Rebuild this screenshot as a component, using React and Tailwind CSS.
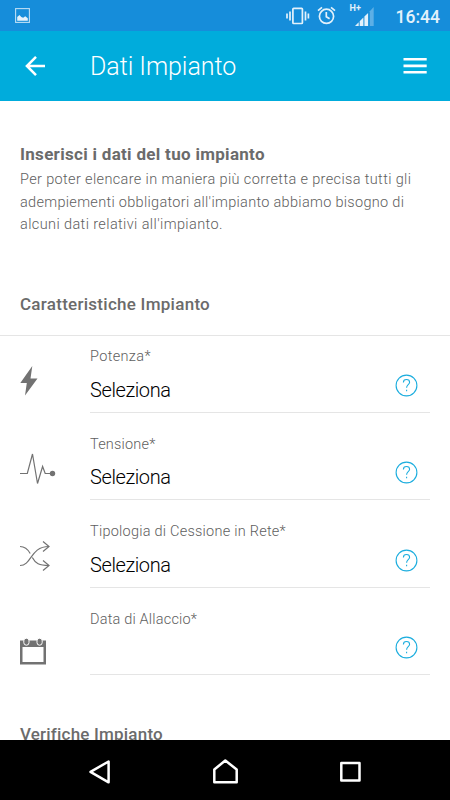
import React from "react";

const BoltIcon = () => (
  <svg width="18" height="30" viewBox="0 0 18 30" fill="#727272">
    <path d="M12.3 0L0.3 17H6.8L5 29.5L17.5 12.5H10.5Z" />
  </svg>
);

const PulseIcon = () => (
  <svg width="36" height="34" viewBox="0 0 36 34" fill="none" stroke="#727272" strokeWidth="1.2">
    <path d="M0 21.5H7.3L12.5 2L17.5 31.5L22.6 14.5L25.2 21.5H32" />
    <circle cx="32.5" cy="21.5" r="2.7" fill="#727272" stroke="none" />
  </svg>
);

const ShuffleIcon = () => (
  <svg width="31" height="30" viewBox="0 0 31 30" fill="none" stroke="#727272" strokeWidth="1.2">
    <path d="M0 5.5C5.5 5.5 8 8.5 10.2 12.5M12.3 16.5C15.5 22.5 19 24.5 29 24.5" />
    <path d="M0 24.5C12 24.5 10 5.5 29 5.5" />
    <path d="M23 0.5L29 5.5L23 10.5M23 19.5L29 24.5L23 29.5" />
  </svg>
);

const CalendarIcon = () => (
  <svg width="26" height="27" viewBox="0 0 26 27" fill="#727272">
    <path fillRule="evenodd" d="M0 2.5H26V26.5H0ZM2.5 9V24H23.5V9Z" />
    <g stroke="#fff" strokeWidth="1">
      <rect x="3.8" y="0.2" width="5.2" height="7" rx="2.6" />
      <rect x="17" y="0.2" width="5.2" height="7" rx="2.6" />
    </g>
  </svg>
);

const HelpIcon = () => (
  <svg width="23" height="23" viewBox="0 0 23 23" fill="none" stroke="#1badde" strokeWidth="1.1">
    <circle cx="11.5" cy="11.5" r="10.4" />
    <path d="M8.4 8.4C8.4 6.5 9.7 5.5 11.5 5.5C13.3 5.5 14.6 6.6 14.6 8.3C14.6 10.6 11.6 10.9 11.6 13.7" />
    <path d="M11.6 15.8V17.3" />
  </svg>
);

const fields = [
  { label: "Potenza*", value: "Seleziona", icon: <BoltIcon />, pad: "pt-[30px]", track: "tracking-[0.35px]" },
  { label: "Tensione*", value: "Seleziona", icon: <PulseIcon />, pad: "pt-[28px]", track: "tracking-[0.2px]" },
  { label: "Tipologia di Cessione in Rete*", value: "Seleziona", icon: <ShuffleIcon />, pad: "pt-[30px]", track: "tracking-[0.24px]" },
  { label: "Data di Allaccio*", value: "", icon: <CalendarIcon />, pad: "pt-[39px]", track: "tracking-[0.19px]" },
];

function StatusBar() {
  return (
    <div className="h-[31px] bg-[#168dda] flex items-center pl-[15px] pr-[10px] text-[#e3f1fb]">
      <svg width="15" height="15" viewBox="0 0 15 15">
        <rect x="0.6" y="0.6" width="13.8" height="13.8" fill="none" stroke="currentColor" strokeWidth="1.1" opacity="0.8" />
        <path d="M2.2 12.8V9L4.5 7L6.3 9L8.2 9.8L10.2 8.3L12.8 10.3V12.8Z" fill="currentColor" />
      </svg>
      <div className="ml-auto flex items-center">
        <svg width="24" height="18" viewBox="0 0 24 18" fill="none" stroke="currentColor" strokeWidth="1.7">
          <rect x="6.9" y="1.3" width="9.5" height="15.2" rx="0.8" />
          <path d="M4 4.5V13.5M1 6.5V11.5M19.5 4.5V13.5M22.4 6.5V11.5" />
        </svg>
        <svg className="ml-[7px]" width="19" height="19" viewBox="0 0 19 19" fill="none" stroke="currentColor" strokeWidth="1.7">
          <circle cx="9.5" cy="10.3" r="7.1" />
          <path d="M1 4.6L5 1.3M18 4.6L14 1.3M9.3 6V10.7L12.6 12.8" />
        </svg>
        <div className="ml-[14px] w-[25px] h-[23px] relative">
          <span className="absolute left-0 top-0 text-[9px] leading-[8px] font-bold">H+</span>
          <svg className="absolute left-[5px] top-[3px]" width="19" height="19" viewBox="0 0 19 19" fill="currentColor">
            <path d="M0 19L3.7 15.3V19ZM4.7 14.3L8.4 10.6V19H4.7ZM9.4 9.6L13.1 5.9V19H9.4Z" />
            <path d="M14.8 4.2L18.7 0V19H14.8Z" opacity="0.35" />
          </svg>
        </div>
        <span className="ml-[21px] text-[17.5px] leading-[30px] pt-[2px] font-medium">16:44</span>
      </div>
    </div>
  );
}

function Header() {
  return (
    <header className="h-[70px] bg-[#00acdc] flex items-center pl-[25px] pr-[23px] text-white">
      <svg width="20" height="20" viewBox="0 0 20 20" fill="none" stroke="currentColor" strokeWidth="2.5">
        <path d="M20 10H2M11 0.9L1.9 10L11 19.1" />
      </svg>
      <h1 className="ml-[45px] pt-px text-[25px] font-light tracking-[-0.05px] leading-[30px]">Dati Impianto</h1>
      <svg className="ml-auto" width="24" height="16" viewBox="0 0 24 16" fill="currentColor">
        <path d="M0.5 0H23.7V2.6H0.5ZM0.5 6.6H23.7V9.2H0.5ZM0.5 13H23.7V15.6H0.5Z" />
      </svg>
    </header>
  );
}

function Field({ label, value, icon, pad, track }) {
  return (
    <div className="h-[87.5px] flex pl-5 pr-5">
      <div className={`w-[70px] shrink-0 ${pad}`}>{icon}</div>
      <div className="h-[76.5px] grow flex border-b border-[#e5e5e5]">
        <div className="grow">
          <div className={`pt-[11px] text-[14.5px] leading-5 font-light whitespace-nowrap text-[#606060] ${track}`}>{label}</div>
          <div className="pt-[9.5px] text-[20px] leading-[26px] font-light tracking-[-0.4px] text-black">{value}</div>
        </div>
        <div className="pt-[37.5px] pr-[12px]"><HelpIcon /></div>
      </div>
    </div>
  );
}

function NavBar() {
  return (
    <nav className="h-[60px] shrink-0 bg-black">
      <svg width="450" height="60" viewBox="0 0 450 60" fill="none" stroke="white" strokeWidth="2.5" strokeLinejoin="round">
        <path d="M108.6 21.5V42.3L90.5 31.9Z" />
        <path d="M214.3 42.3V29.5L225.3 20.5L236.7 29.5V42.3Z" />
        <rect x="341.3" y="23" width="18.2" height="17.6" />
      </svg>
    </nav>
  );
}

export default function App() {
  return (
    <div className="w-[450px] h-[800px] flex flex-col overflow-hidden bg-white font-[Roboto,sans-serif]">
      <StatusBar />
      <Header />
      <main className="h-[639px] overflow-hidden text-[#6b6b6b]">
        <section className="pt-[41px] px-5 h-[191px]">
          <h2 className="text-[17px] leading-[24px] font-bold tracking-[0.3px]">Inserisci i dati del tuo impianto</h2>
          <div className="pt-[3px] text-[14.5px] leading-[22.5px] font-light whitespace-nowrap text-[#606060]">
            <p className="tracking-[0.36px]">Per poter elencare in maniera più corretta e precisa tutti gli</p>
            <p className="tracking-[0.31px]">adempiementi obbligatori all'impianto abbiamo bisogno di</p>
            <p className="tracking-[0.39px]">alcuni dati relativi all'impianto.</p>
          </div>
        </section>
        <h3 className="h-[44px] px-5 text-[17px] leading-[24px] font-medium tracking-[0.27px] border-b border-[#e5e5e5]">Caratteristiche Impianto</h3>
        {fields.map((f) => <Field key={f.label} {...f} />)}
        <h3 className="px-5 pt-[36px] text-[17px] leading-[24px] font-medium tracking-[0.2px]">Verifiche Impianto</h3>
      </main>
      <NavBar />
    </div>
  );
}
